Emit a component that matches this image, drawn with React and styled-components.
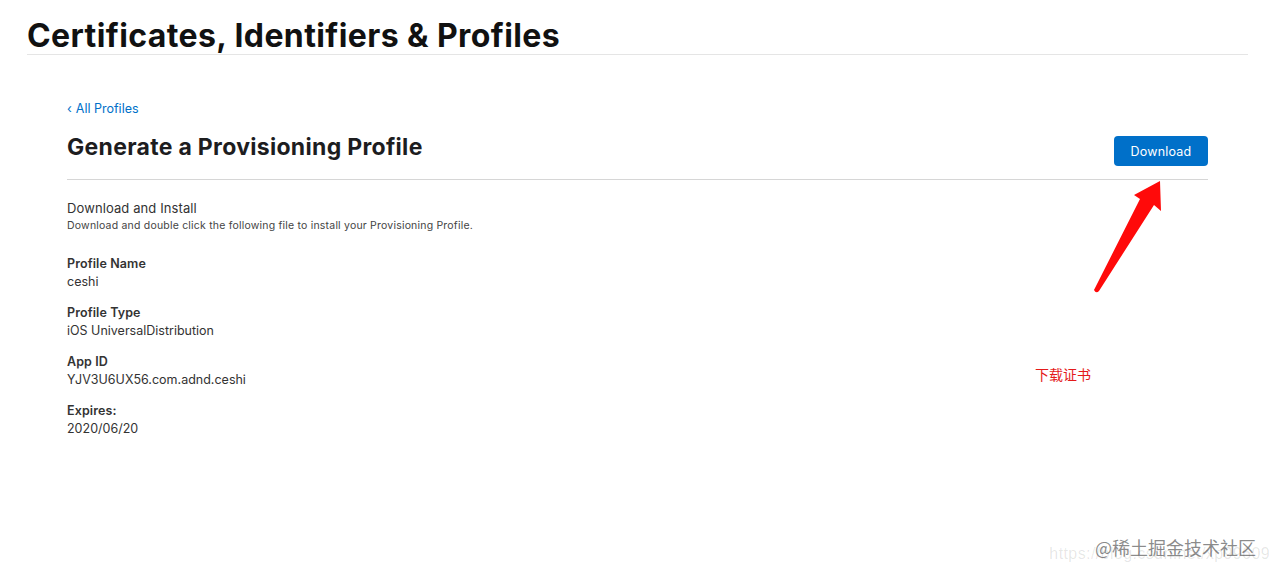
import styled, { createGlobalStyle } from "styled-components";

const GlobalStyle = createGlobalStyle`
  html, body {
    margin: 0;
    padding: 0;
    background: #fff;
  }
  body {
    font-family: Inter, "Noto Sans", "Noto Sans CJK SC", sans-serif;
    color: #333;
  }
`;

const Page = styled.div`
  position: relative;
  width: 1276px;
  height: 575px;
  overflow: hidden;
`;

const Header = styled.header`
  margin: 0 28px 0 27px;
  padding-top: 17px;
  border-bottom: 1px solid #e5e5e5;
`;

const HeaderTitle = styled.h1`
  margin: 0;
  font-size: 32px;
  font-weight: 700;
  line-height: 37px;
  letter-spacing: 0.4px;
  color: #111;
`;

const Main = styled.main`
  padding: 42px 68px 0 67px;
`;

const BackLink = styled.a`
  display: inline-flex;
  align-items: center;
  gap: 4px;
  font-size: 12.5px;
  line-height: 16px;
  color: #0070c9;
  text-decoration: none;
`;

const TitleRow = styled.div`
  display: flex;
  align-items: flex-start;
  justify-content: space-between;
  margin-top: 15px;
  padding-bottom: 13px;
  border-bottom: 1px solid #d6d6d6;
`;

const PageTitle = styled.h2`
  margin: 0;
  font-size: 23px;
  font-weight: 700;
  line-height: 30px;
  letter-spacing: 0.3px;
  color: #1d1d1f;
`;

const DownloadButton = styled.button`
  width: 94px;
  height: 30px;
  margin-top: 4px;
  border: 0;
  border-radius: 4px;
  background: #0070c9;
  color: #fff;
  font-family: inherit;
  font-size: 12.5px;
  letter-spacing: 0.2px;
  cursor: pointer;
`;

const Details = styled.div`
  display: flex;
  flex-direction: column;
  gap: 15px;
  padding-top: 20px;
`;

const Intro = styled.div`
  margin-bottom: 8px;
`;

const IntroTitle = styled.div`
  font-size: 13px;
  line-height: 17px;
  letter-spacing: 0.1px;
  color: #333;
`;

const IntroText = styled.div`
  margin-top: 2px;
  font-size: 10.5px;
  line-height: 14px;
  letter-spacing: 0.2px;
  color: #444;
`;

const Field = styled.div`
  display: flex;
  flex-direction: column;
  gap: 2px;
`;

const Label = styled.div`
  font-size: 12.5px;
  font-weight: 600;
  line-height: 16px;
  letter-spacing: 0.1px;
  color: #333;
`;

const Value = styled.div`
  font-size: 12.5px;
  line-height: 16px;
  color: #333;
`;

const Note = styled.div`
  position: absolute;
  left: 1035px;
  top: 365px;
  font-family: "Noto Sans CJK SC", sans-serif;
  font-size: 14px;
  line-height: 18px;
  color: #e41a1a;
`;

const Arrow = styled.svg`
  position: absolute;
  left: 1088px;
  top: 176px;
`;

const Watermark = styled.div`
  position: absolute;
  right: 6px;
  bottom: 17px;
  text-align: right;
`;

const WatermarkUrl = styled.div`
  position: absolute;
  right: 0;
  top: 9px;
  font-family: "Liberation Sans", sans-serif;
  font-size: 16px;
  letter-spacing: 0.4px;
  white-space: nowrap;
  color: rgba(0, 0, 0, 0.1);
`;

const WatermarkText = styled.div`
  position: relative;
  margin-right: 14px;
  font-family: "Noto Sans CJK SC", sans-serif;
  font-size: 18px;
  line-height: 22px;
  color: rgba(60, 60, 60, 0.6);
`;

const fields = [
  { label: "Profile Name", value: "ceshi" },
  { label: "Profile Type", value: "iOS UniversalDistribution" },
  { label: "App ID", value: "YJV3U6UX56.com.adnd.ceshi" },
  { label: "Expires:", value: "2020/06/20" },
];

const App = () => {
  return (
    <Page>
      <GlobalStyle />
      <Header>
        <HeaderTitle>Certificates, Identifiers &amp; Profiles</HeaderTitle>
      </Header>
      <Main>
        <BackLink href="#">
          <span>‹</span>
          <span>All Profiles</span>
        </BackLink>
        <TitleRow>
          <PageTitle>Generate a Provisioning Profile</PageTitle>
          <DownloadButton>Download</DownloadButton>
        </TitleRow>
        <Details>
          <Intro>
            <IntroTitle>Download and Install</IntroTitle>
            <IntroText>
              Download and double click the following file to install your
              Provisioning Profile.
            </IntroText>
          </Intro>
          {fields.map((f) => (
            <Field key={f.label}>
              <Label>{f.label}</Label>
              <Value>{f.value}</Value>
            </Field>
          ))}
        </Details>
      </Main>

      <Arrow width="80" height="120" viewBox="0 0 80 120">
        {/* annotation arrow, tip near the button */}
        <path
          d="M72 5 L73 35 L66 29 L11 115 Q8 118 6 114 L52 23 L46 19 Z"
          fill="#ff0a0a"
        />
      </Arrow>
      <Note>下载证书</Note>

      <Watermark>
        <WatermarkUrl>https://blog.csdn.net/xp99609</WatermarkUrl>
        <WatermarkText>@稀土掘金技术社区</WatermarkText>
      </Watermark>
    </Page>
  );
};

export default App;
